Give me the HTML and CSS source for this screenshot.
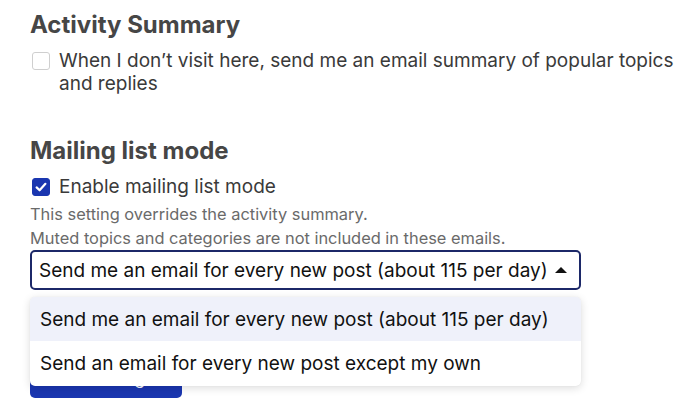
FILE: index.html
```html
<!DOCTYPE html>
<html>
<head>
<meta charset="utf-8">
<link rel="stylesheet" href="styles.css">
</head>
<body>
<div class="page">
  <section class="group">
    <h2 class="title">Activity Summary</h2>
    <label class="check">
      <span class="box"></span>
      <span class="check-text">When I don’t visit here, send me an email summary of popular topics and replies</span>
    </label>
  </section>

  <section class="group group-mail">
    <h2 class="title">Mailing list mode</h2>
    <label class="check">
      <span class="box box-on">
        <svg viewBox="0 0 18 18" width="18" height="18"><path d="M4.6 9.4 L7.6 12.3 L13.4 5.8" fill="none" stroke="#fff" stroke-width="2.2" stroke-linecap="round" stroke-linejoin="round"/></svg>
      </span>
      <span class="check-text">Enable mailing list mode</span>
    </label>
    <p class="desc">This setting overrides the activity summary.<br>Muted topics and categories are not included in these emails.</p>

    <div class="select-wrap">
      <div class="select">
        <span class="select-value">Send me an email for every new post (about 115 per day)</span>
        <svg class="caret" viewBox="0 0 12 6" width="12" height="6"><path d="M0 6 L6 0 L12 6 Z" fill="#111"/></svg>
      </div>
      <button class="save">Save Changes</button>
      <ul class="menu">
        <li class="opt opt-active">Send me an email for every new post (about 115 per day)</li>
        <li class="opt">Send an email for every new post except my own</li>
      </ul>
    </div>
  </section>
</div>
</body>
</html>
```

FILE: styles.css
```css
html, body {
  margin: 0;
  padding: 0;
  background: #fff;
}
body {
  font-family: Inter, "Noto Sans", sans-serif;
  color: #333;
}
.page {
  padding: 10px 0 0 30px;
  width: 660px;
}
.title {
  margin: 0;
  font-size: 24px;
  line-height: 29px;
  font-weight: 700;
  color: #464646;
}
.check {
  display: flex;
  align-items: flex-start;
  gap: 9px;
  margin-top: 10px;
}
.box {
  flex: none;
  width: 16px;
  height: 16px;
  margin: 3px 0 0 2px;
  border: 1px solid #cfcfcf;
  border-radius: 3px;
  background: #fff;
  position: relative;
}
.box-on {
  background: #1a36b0;
  border-color: #1a36b0;
}
.box-on svg {
  position: absolute;
  left: -1px;
  top: -1px;
}
.check-text {
  font-size: 19px;
  line-height: 23px;
  color: #3a3a3a;
  width: 620px;
}
.group-mail {
  margin-top: 41px;
}
.desc {
  margin: 4px 0 0;
  font-size: 16.4px;
  line-height: 24px;
  color: #6a6a6a;
}
.select-wrap {
  position: relative;
  width: 551px;
}
.select {
  box-sizing: border-box;
  height: 40px;
  border: 2px solid #1c2868;
  border-radius: 5px;
  display: flex;
  align-items: center;
  padding: 0 12px 0 7px;
  justify-content: space-between;
}
.select-value {
  font-size: 19px;
  color: #111;
}
.caret {
  margin-top: -1px;
}
.save {
  display: block;
  box-sizing: border-box;
  width: 152px;
  height: 40px;
  margin-top: 68px;
  border: 0;
  padding: 0;
  background: #1a36b0;
  border-radius: 5px;
  color: #fff;
  font-family: Inter, "Noto Sans", sans-serif;
  font-size: 17px;
}
.menu {
  position: absolute;
  left: 0;
  top: 47px;
  width: 551px;
  margin: 0;
  padding: 0;
  list-style: none;
  background: #fff;
  border-radius: 5px;
  box-shadow: 0 2px 8px rgba(0, 0, 0, 0.14), 0 0 1px rgba(0, 0, 0, 0.1);
  overflow: hidden;
}
.opt {
  height: 44px;
  display: flex;
  align-items: center;
  padding-left: 10px;
  font-size: 19px;
  color: #111;
}
.opt + .opt {
  height: 45px;
}
.opt-active {
  background: #eff1fa;
}
```
